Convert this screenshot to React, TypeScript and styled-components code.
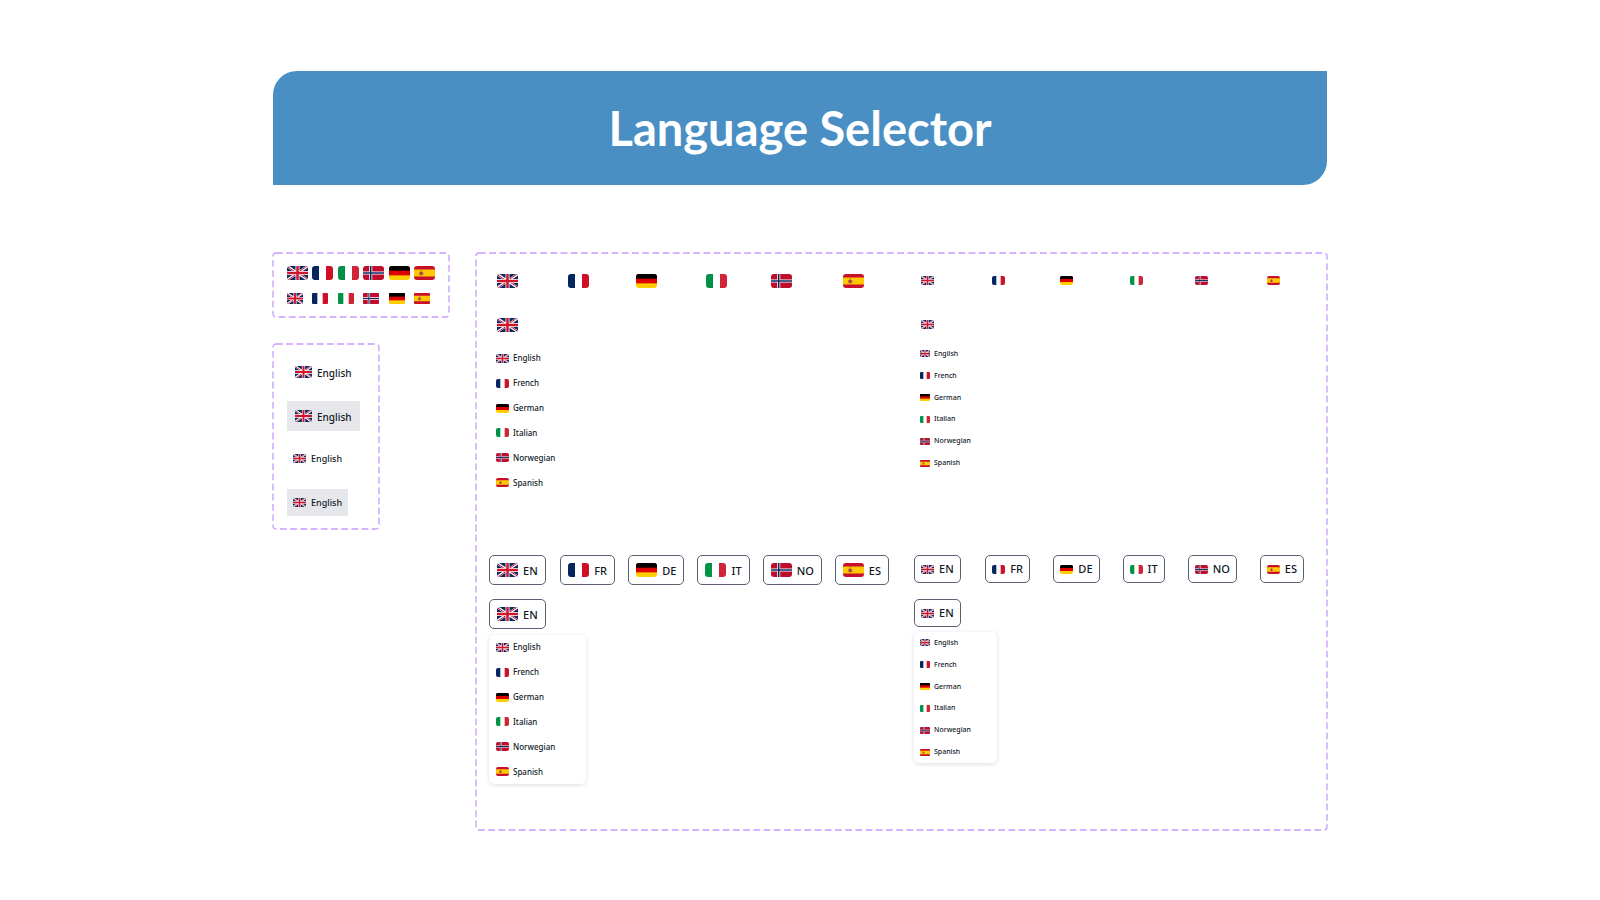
import React from "react";
import styled, { createGlobalStyle, css } from "styled-components";

type Code = "EN" | "FR" | "DE" | "IT" | "NO" | "ES";
type Size = "lg" | "sm";
type FlagSize = "xl" | "l" | "m" | "s" | "xs";

const LANGUAGES: { code: Code; name: string }[] = [
  { code: "EN", name: "English" },
  { code: "FR", name: "French" },
  { code: "DE", name: "German" },
  { code: "IT", name: "Italian" },
  { code: "NO", name: "Norwegian" },
  { code: "ES", name: "Spanish" },
];

const FLAG_SIZES: Record<FlagSize, { w: number; h: number; r: number }> = {
  xl: { w: 21, h: 14, r: 3 },
  l: { w: 17, h: 12, r: 2 },
  m: { w: 16, h: 11, r: 1 },
  s: { w: 13, h: 9, r: 2 },
  xs: { w: 10, h: 7, r: 1 },
};

const GlobalStyle = createGlobalStyle`
  *, *::before, *::after { box-sizing: border-box; }
  body {
    margin: 0;
    background: #ffffff;
    color: #111928;
    font-family: "Noto Sans", "Open Sans", sans-serif;
    font-weight: 500;
  }
  button { font: inherit; color: inherit; cursor: pointer; }
`;

const Page = styled.main`
  width: calc(100% - 48px);
  max-width: 1054px;
  margin: 0 auto;
  padding: 71px 0 70px;
`;

const Banner = styled.header`
  display: flex;
  align-items: center;
  justify-content: center;
  min-height: 114px;
  margin-bottom: 68px;
  border-radius: 24px 0;
  background: #498fc4;
`;

const Title = styled.h1`
  margin: 0;
  color: #ffffff;
  font-family: Lato, "Open Sans", sans-serif;
  font-size: 47px;
  line-height: 60px;
  font-weight: 700;
`;

const Columns = styled.div`
  display: grid;
  grid-template-columns: 176px minmax(0, 1fr);
  column-gap: 27px;
  align-items: start;
`;

const Sidebar = styled.div`
  display: flex;
  flex-direction: column;
  align-items: flex-start;
  gap: 27px;
`;

const PanelBox = styled.section`
  position: relative;
  padding: 13px;
`;

const Outline = styled.svg`
  position: absolute;
  inset: 0;
  width: 100%;
  height: 100%;
  overflow: visible;
  pointer-events: none;
  rect {
    fill: none;
    stroke: #c79bff;
    stroke-width: 1.3px;
    stroke-dasharray: 6.8 3.4;
  }
`;

const FlagPanel = styled(PanelBox)`
  width: 100%;
  display: grid;
  grid-template-columns: repeat(5, 1fr) 21px;
  row-gap: 13px;
  padding: 13px 14px;
`;

const ItemPanel = styled(PanelBox)`
  width: 106px;
  display: grid;
  grid-template-rows: repeat(3, 44px) auto;
  justify-items: start;
  align-items: start;
  padding: 13px 14px;
`;

const PickerPanel = styled(PanelBox)`
  min-height: 577px;
  display: flex;
  flex-direction: column;
  gap: 27px;
`;

const PickerRow = styled.div`
  display: grid;
  grid-template-columns: 1fr 1fr;
  column-gap: 25px;
  min-height: 262px;
`;

const PickerGroup = styled.div`
  display: flex;
  flex-direction: column;
`;

const TriggerRow = styled.div`
  display: grid;
  grid-template-columns: 71fr 68fr 69fr 65fr 72fr 54fr;
  align-items: start;
  justify-items: start;
  min-height: 44px;
`;

const OpenPicker = styled.div<{ $size: Size }>`
  display: flex;
  flex-direction: column;
  align-items: flex-start;
  gap: ${({ $size }) => ($size === "lg" ? 6 : 5)}px;
`;

const Label = styled.span<{ $size: Size }>`
  padding-top: ${({ $size }) => ($size === "lg" ? 2 : 0)}px;
`;

const TriggerButton = styled.button<{ $size: Size; $outlined: boolean }>`
  display: flex;
  align-items: center;
  gap: 5px;
  height: ${({ $size }) => ($size === "lg" ? 30 : 28)}px;
  padding: 0 ${({ $size }) => ($size === "lg" ? 7 : 6)}px;
  border: 1px solid ${({ $outlined }) => ($outlined ? "#5a6170" : "transparent")};
  border-radius: 5px;
  background: transparent;
  font-size: 11px;
  line-height: 16px;
`;

const Menu = styled.ul<{ $size: Size; $raised: boolean }>`
  list-style: none;
  margin: 0;
  padding: 0;
  display: grid;
  grid-auto-rows: 1fr;
  border-radius: 5px;
  ${({ $size }) =>
    $size === "lg"
      ? css`
          width: 97px;
          height: 149px;
        `
      : css`
          width: 83px;
          height: 131px;
        `}
  ${({ $raised }) =>
    $raised &&
    css`
      box-shadow: 0 1px 4px rgba(17, 24, 39, 0.14);
    `}
`;

const MenuOption = styled.button<{ $size: Size }>`
  display: flex;
  align-items: center;
  gap: 4px;
  width: 100%;
  height: 100%;
  padding: 0 ${({ $size }) => ($size === "lg" ? 7 : 6)}px;
  border: 0;
  background: transparent;
  font-size: ${({ $size }) => ($size === "lg" ? 8 : 7)}px;
  line-height: 12px;
`;

const Item = styled.button<{ $size: Size; $active?: boolean }>`
  display: flex;
  align-items: center;
  gap: 5px;
  height: ${({ $size }) => ($size === "lg" ? 30 : 27)}px;
  padding: 0 ${({ $size }) => ($size === "lg" ? 8 : 6)}px;
  border: 0;
  background: ${({ $active }) => ($active ? "#e5e7eb" : "transparent")};
  font-size: ${({ $size }) => ($size === "lg" ? 10 : 9)}px;
  line-height: 16px;
`;

const FlagSvg = styled.svg<{ $size: FlagSize }>`
  display: block;
  flex: none;
  overflow: hidden;
  width: ${({ $size }) => FLAG_SIZES[$size].w}px;
  height: ${({ $size }) => FLAG_SIZES[$size].h}px;
  border-radius: ${({ $size }) => FLAG_SIZES[$size].r}px;
`;

const ART: Record<Code, React.ReactNode> = {
  EN: (
    <>
      <rect width="42" height="28" fill="#0a2a66" />
      <path d="M0 0L42 28M42 0L0 28" stroke="#fff" strokeWidth="5" />
      <path d="M0 1L21 15M42 -1L21 13M42 27L21 13M0 29L21 15" stroke="#d0142c" strokeWidth="2" />
      <path d="M21 0V28M0 14H42" stroke="#fff" strokeWidth="8" />
      <path d="M21 0V28M0 14H42" stroke="#d0142c" strokeWidth="5" />
    </>
  ),
  FR: (
    <>
      <rect width="42" height="28" fill="#fff" />
      <rect width="14" height="28" fill="#06265f" />
      <rect x="28" width="14" height="28" fill="#cf1029" />
    </>
  ),
  DE: (
    <>
      <rect width="42" height="28" fill="#ffce00" />
      <rect width="42" height="18.7" fill="#dd0000" />
      <rect width="42" height="9.3" fill="#000" />
    </>
  ),
  IT: (
    <>
      <rect width="42" height="28" fill="#fff" />
      <rect width="14" height="28" fill="#009246" />
      <rect x="28" width="14" height="28" fill="#d02536" />
    </>
  ),
  NO: (
    <>
      <rect width="42" height="28" fill="#bf0d2c" />
      <path d="M15.500 0V28M0 14H42" stroke="#fff" strokeWidth="6" />
      <path d="M15.500 0V28M0 14H42" stroke="#0a2a66" strokeWidth="3" />
    </>
  ),
  ES: (
    <>
      <rect width="42" height="28" fill="#c8102a" />
      <rect y="7" width="42" height="14" fill="#ffc800" />
      <path d="M10 12h2v6h-2zM17 12h2v6h-2z" fill="#b5875a" />
      <path d="M12 12h5v4q0 3-2.500 3t-2.500-3z" fill="#b3402f" />
      <path d="M12.500 9h4l-.5 2.500h-3z" fill="#b06a1c" />
    </>
  ),
};

function Flag({ code, size }: { code: Code; size: FlagSize }) {
  return (
    <FlagSvg $size={size} viewBox="0 0 42 28" preserveAspectRatio="none" aria-hidden="true">
      {ART[code]}
    </FlagSvg>
  );
}

function DashedOutline() {
  return (
    <Outline aria-hidden="true">
      <rect width="100%" height="100%" rx="3" />
    </Outline>
  );
}

function Trigger({
  code,
  name,
  size,
  outlined,
  open = false,
}: {
  code: Code;
  name: string;
  size: Size;
  outlined: boolean;
  open?: boolean;
}) {
  return (
    <TriggerButton
      type="button"
      $size={size}
      $outlined={outlined}
      aria-label={name}
      aria-expanded={open}
    >
      <Flag code={code} size={size === "lg" ? "xl" : "s"} />
      {outlined && <Label $size={size}>{code}</Label>}
    </TriggerButton>
  );
}

function Picker({ size, outlined }: { size: Size; outlined: boolean }) {
  return (
    <PickerGroup>
      <TriggerRow>
        {LANGUAGES.map((l) => (
          <Trigger key={l.code} code={l.code} name={l.name} size={size} outlined={outlined} />
        ))}
      </TriggerRow>
      <OpenPicker $size={size}>
        <Trigger code="EN" name="English" size={size} outlined={outlined} open />
        <Menu $size={size} $raised={outlined}>
          {LANGUAGES.map((l) => (
            <li key={l.code}>
              <MenuOption type="button" $size={size}>
                <Flag code={l.code} size={size === "lg" ? "s" : "xs"} />
                <span>{l.name}</span>
              </MenuOption>
            </li>
          ))}
        </Menu>
      </OpenPicker>
    </PickerGroup>
  );
}

function LanguageItem({ size, active }: { size: Size; active?: boolean }) {
  return (
    <Item type="button" $size={size} $active={active}>
      <Flag code="EN" size={size === "lg" ? "l" : "s"} />
      <Label $size={size}>English</Label>
    </Item>
  );
}

const FLAG_ORDER: Code[] = ["EN", "FR", "IT", "NO", "DE", "ES"];

export default function App() {
  return (
    <>
      <GlobalStyle />
      <Page>
        <Banner>
          <Title>Language Selector</Title>
        </Banner>
        <Columns>
          <Sidebar>
            <FlagPanel aria-label="Flags">
              <DashedOutline />
              {FLAG_ORDER.map((c) => (
                <Flag key={c} code={c} size="xl" />
              ))}
              {FLAG_ORDER.map((c) => (
                <Flag key={c} code={c} size="m" />
              ))}
            </FlagPanel>
            <ItemPanel aria-label="Language items">
              <DashedOutline />
              <LanguageItem size="lg" />
              <LanguageItem size="lg" active />
              <LanguageItem size="sm" />
              <LanguageItem size="sm" active />
            </ItemPanel>
          </Sidebar>
          <PickerPanel aria-label="Language selectors">
            <DashedOutline />
            <PickerRow>
              <Picker size="lg" outlined={false} />
              <Picker size="sm" outlined={false} />
            </PickerRow>
            <PickerRow>
              <Picker size="lg" outlined />
              <Picker size="sm" outlined />
            </PickerRow>
          </PickerPanel>
        </Columns>
      </Page>
    </>
  );
}
